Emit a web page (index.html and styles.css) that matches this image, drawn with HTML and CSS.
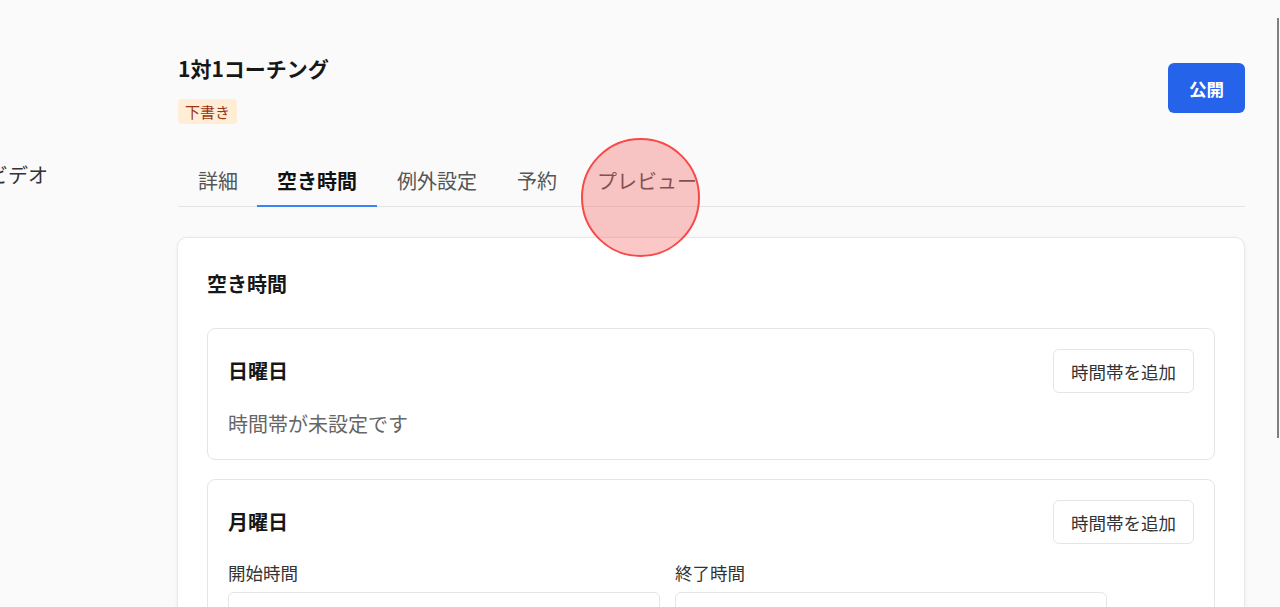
FILE: index.html
```html
<!doctype html>
<html lang="ja">

<head>
  <meta charset="utf-8">
  <title>1対1コーチング</title>
  <link rel="stylesheet" href="styles.css">
</head>

<body>
  <div class="layout">
    <aside class="sidebar">
      <div class="side-item">ビデオ</div>
    </aside>

    <main class="main">
      <div class="page-header">
        <div>
          <h1 class="title">1対1コーチング</h1>
          <span class="badge">下書き</span>
        </div>
        <button class="primary-btn">公開</button>
      </div>

      <nav class="tabs">
        <div class="tab">詳細</div>
        <div class="tab active">空き時間</div>
        <div class="tab">例外設定</div>
        <div class="tab">予約</div>
        <div class="tab">プレビュー</div>
      </nav>

      <section class="card">
        <h2 class="card-title">空き時間</h2>

        <div class="day">
          <div class="day-head">
            <h3 class="day-name">日曜日</h3>
            <button class="ghost-btn">時間帯を追加</button>
          </div>
          <div class="empty">時間帯が未設定です</div>
        </div>

        <div class="day">
          <div class="day-head">
            <h3 class="day-name">月曜日</h3>
            <button class="ghost-btn">時間帯を追加</button>
          </div>
          <div class="slot">
            <div>
              <div class="label">開始時間</div>
              <div class="input">09:00</div>
            </div>
            <div>
              <div class="label">終了時間</div>
              <div class="input">17:00</div>
            </div>
            <button class="ghost-btn remove">削除</button>
          </div>
        </div>
      </section>
    </main>
  </div>

  <div class="click-mark"></div>
  <div class="scroll-thumb"></div>
</body>

</html>
```

FILE: styles.css
```css
html, body {
  margin: 0;
  background: #fafafa;
  color: #171717;
  font-family: "Noto Sans CJK JP", "Noto Sans", sans-serif;
}
.layout {
  display: flex;
  min-height: 100vh;
}
.sidebar {
  width: 178px;
  flex-shrink: 0;
  overflow: hidden;
  padding-top: 160px;
}
.side-item {
  margin-left: -12px;
  font-size: 20px;
  line-height: 30px;
  color: #333;
  white-space: nowrap;
}
.main {
  flex: 1;
  padding: 54px 35px 0 0;
}
.page-header {
  display: flex;
  justify-content: space-between;
  align-items: flex-start;
}
.title {
  margin: 0 0 17px;
  font-size: 21px;
  line-height: 28px;
  font-weight: 700;
}
.badge {
  display: inline-block;
  padding: 2px 7px;
  font-size: 15px;
  line-height: 21px;
  border-radius: 4px;
  background: #ffedd5;
  color: #9a3412;
}
.primary-btn {
  height: 50px;
  margin-top: 9px;
  padding: 0 21px;
  border: 0;
  border-radius: 6px;
  background: #2563eb;
  color: #fff;
  font-family: inherit;
  font-size: 17.5px;
  font-weight: 700;
}
.tabs {
  display: flex;
  margin-top: 33px;
  border-bottom: 1px solid #e5e5e5;
}
.tab {
  padding: 10px 20px;
  font-size: 20px;
  line-height: 28px;
  color: #555;
  border-bottom: 2px solid transparent;
  margin-bottom: -1px;
}
.tab:first-child {
  margin-right: -1px;
}
.tab.active {
  color: #111;
  font-weight: 700;
  border-bottom-color: #3b82f6;
}
.card {
  margin-top: 30px;
  margin-left: -1px;
  padding: 31px 29px 0;
  background: #fff;
  border: 1px solid #e8e8e8;
  border-radius: 10px;
  box-shadow: 0 1px 4px rgba(0, 0, 0, 0.05);
}
.card-title {
  margin: 0 0 29px;
  font-size: 20px;
  line-height: 30px;
  font-weight: 700;
}
.day {
  border: 1px solid #e5e5e5;
  border-radius: 8px;
  padding: 20px;
  margin-bottom: 19px;
}
.day-head {
  display: flex;
  justify-content: space-between;
  align-items: center;
}
.day-name {
  margin: 0;
  font-size: 20px;
  line-height: 30px;
  font-weight: 700;
}
.ghost-btn {
  height: 44px;
  padding: 0 17px;
  border: 1px solid #e5e5e5;
  border-radius: 6px;
  background: #fff;
  color: #333;
  font-family: inherit;
  font-size: 17.5px;
}
.empty {
  margin-top: 16px;
  font-size: 20px;
  line-height: 30px;
  color: #666;
}
.slot {
  display: grid;
  grid-template-columns: 1fr 1fr 72px;
  gap: 15px;
  align-items: end;
  margin-top: 16px;
}
.label {
  font-size: 17.5px;
  line-height: 25px;
  color: #333;
  margin-bottom: 7px;
}
.input {
  height: 48px;
  padding: 0 15px;
  border: 1px solid #e5e5e5;
  border-radius: 6px;
  font-size: 17.5px;
  line-height: 48px;
}
.remove {
  padding: 0;
  height: 34px;
}
.click-mark {
  position: absolute;
  left: 581px;
  top: 138px;
  width: 115px;
  height: 115px;
  border-radius: 50%;
  border: 2.5px solid #f84848;
  background: rgba(245, 68, 68, 0.3);
}
.scroll-thumb {
  position: fixed;
  right: 1px;
  top: 18px;
  width: 2px;
  height: 420px;
  background: #808080;
}
```
